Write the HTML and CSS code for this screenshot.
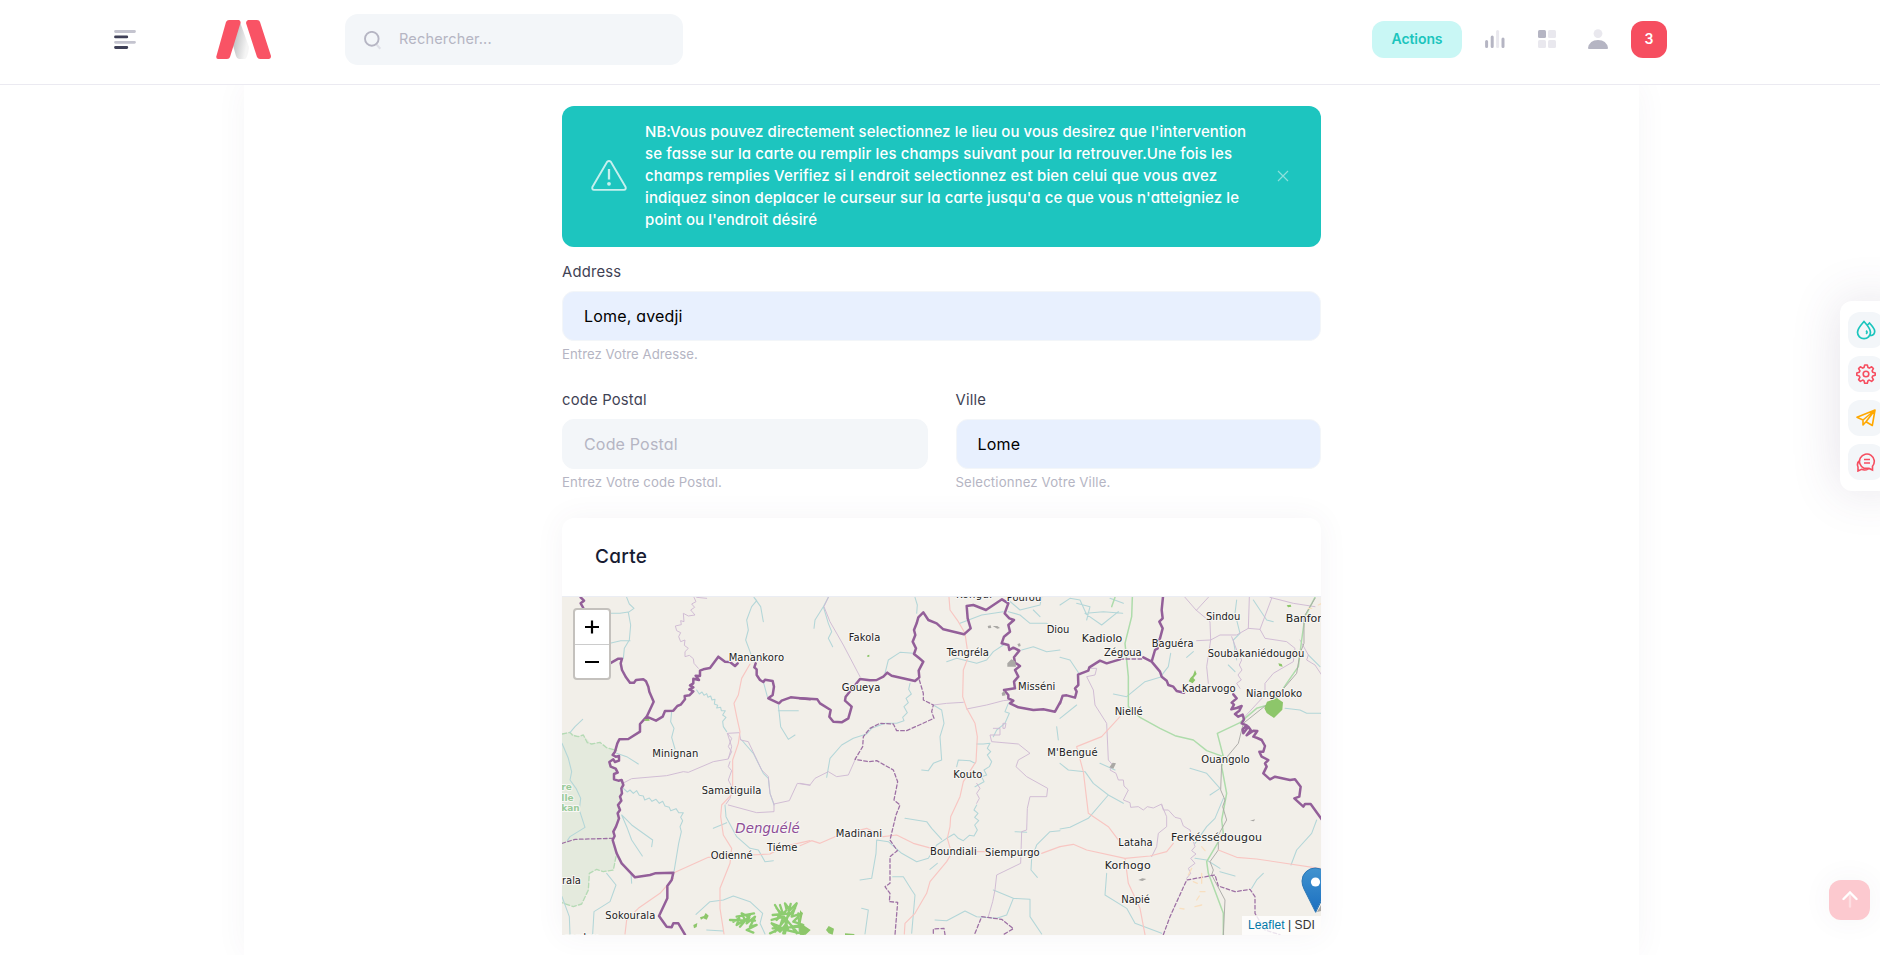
FILE: index.html
```html
<!DOCTYPE html>
<html lang="fr">
<head>
<meta charset="utf-8">
<title>Adresse</title>
<link rel="stylesheet" href="styles.css">
</head>
<body>
<header class="header">
  <div class="header-left">
    <svg class="menu-icon" width="22" height="19" viewBox="0 0 22 19"><g stroke-width="2.8" stroke-linecap="round"><path stroke="#c4c4cf" d="M1.500 1.500h19M1.500 12.300h19"/><path stroke="#3f4057" d="M1.500 6.900h11.300M1.500 17.500h11.300"/></g></svg>
    <svg class="logo" width="55" height="39" viewBox="0 0 55 39"><defs><linearGradient id="lg" x1="0" y1="0.2" x2="1" y2="0.6"><stop offset="0.1" stop-color="#b9bbbd"/><stop offset="0.9" stop-color="#f5f5f5"/></linearGradient></defs><path fill="url(#lg)" d="M24 2L33 27Q32 37 29 39H23Q21 39 20 36L16 22Z"/><path fill="#f95365" d="M13 0H23Q25 1 24.500 3L14 37Q13.500 39 11 39H2Q0 39 .3 36.500L10 2Q11 0 13 0ZM32 0H41Q43.500 0 44 2L55 36Q55 39 52.500 39H44Q42 39 41 37L30 3Q30 1 32 0Z"/></svg>
    <div class="search">
      <svg class="search-icon" width="18" height="20" viewBox="0 0 18 20" fill="none"><path d="M12.500 13.500l3.800 4.200" stroke="#dfe0e8" stroke-width="2.200"/><ellipse cx="7.800" cy="7.800" rx="6.800" ry="6.900" stroke="#b5b5c3" stroke-width="1.900"/></svg>
      <span class="t-search">Rechercher...</span>
    </div>
  </div>
  <div class="header-right">
    <div class="actions">Actions</div>
    <svg class="i-bars" width="20" height="18" viewBox="0 0 20 18" stroke-linecap="round" stroke-width="3"><path stroke="#b5b5c3" d="M1.600 11.500v5M7.200 7v9.500M18 9v7.500"/><path stroke="#e9e8ee" d="M12.600 1.600v15"/></svg>
    <svg class="i-grid" width="18" height="18" viewBox="0 0 18 18"><rect width="8" height="8" rx="1.500" fill="#b5b5c3"/><g fill="#e9e8ee"><rect x="10" width="8" height="8" rx="1.500"/><rect y="10" width="8" height="8" rx="1.500"/><rect x="10" y="10" width="8" height="8" rx="1.500"/></g></svg>
    <svg class="i-user" width="20" height="20" viewBox="0 0 20 20"><circle cx="10" cy="4.600" r="4.400" fill="#e9e8ee"/><path fill="#b5b5c3" d="M0 19Q1.500 11 10 11T20 19Q20 20 19 20H1Q0 20 0 19Z"/></svg>
    <div class="count">3</div>
  </div>
</header>

<main class="content">
  <div class="form">
    <div class="alert">
      <svg class="warning" width="36" height="31" viewBox="0 0 36 31" fill="none" stroke="#c6f0ee" stroke-width="1.900"><path d="M16.200 1.800Q18 .2 19.800 1.800L34.600 27Q35.300 29.700 33 29.900H3Q.7 29.700 1.400 27Z" stroke-linejoin="round"/><path d="M18 9v10.500" stroke-width="2.300"/><circle cx="18" cy="23.800" r="1.900" fill="#c6f0ee" stroke="none"/></svg>
      <p class="alert-text"><span class="l1">NB:Vous pouvez directement selectionnez le lieu ou vous desirez que l'intervention</span><br><span class="l2">se fasse sur la carte ou remplir les champs suivant pour la retrouver.Une fois les</span><br><span class="l3">champs remplies Verifiez si l endroit selectionnez est bien celui que vous avez</span><br><span class="l4">indiquez sinon deplacer le curseur sur la carte jusqu'a ce que vous n'atteigniez le</span><br><span class="l5">point ou l'endroit désiré</span></p>
      <svg class="close" width="12" height="12" viewBox="0 0 12 12" stroke="#8ce0dc" stroke-width="1.200"><path d="M1 1l10 10M11 1L1 11"/></svg>
    </div>
    <div class="field">
      <label class="label">Address</label>
      <div class="input filled">Lome, avedji</div>
      <div class="help short">Entrez Votre Adresse.</div>
    </div>
    <div class="row">
      <div class="field">
        <label class="label">code Postal</label>
        <div class="input">Code Postal</div>
        <div class="help">Entrez Votre code Postal.</div>
      </div>
      <div class="field">
        <label class="label">Ville</label>
        <div class="input filled">Lome</div>
        <div class="help wide">Selectionnez Votre Ville.</div>
      </div>
    </div>
    <section class="card">
      <h3 class="card-title">Carte</h3>
      <div class="map">
        <svg class="tiles" width="759" height="338" viewBox="562 597 759 338">
          <defs>
            <linearGradient id="pin" x1="0" y1="0" x2="0" y2="1"><stop offset="0" stop-color="#4193cf"/><stop offset="1" stop-color="#1b6fc0"/></linearGradient>
          </defs>
          <!-- western part -->
          <g transform="translate(550 580) scale(.33333)">
            <path class="park" d="M36 462L60 457 85 470 100 465 125 492 150 487 170 503 200 510 180 550 200 570 190 595 220 605 208 700 190 780 198 830 190 870 160 875 140 868 118 880 115 930 95 972 70 980 36 968Z"/>
            <path class="parkline" d="M36 462L60 457 68 466 85 470 100 465 112 488 125 492 150 487 170 503 200 512M198 830L190 870 160 875 140 868 118 880 115 930 95 972 70 980 36 968"/>
            <path class="river" d="M230 52L238 72 252 85 235 97 242 135 238 180 223 205 220 235M180 100L210 100 235 96M180 190L212 182 240 182M612 52L620 62 605 80 590 120 595 150 587 180 600 215 610 245M612 52L632 80 640 125M365 395L362 425 372 445 365 472 375 507M60 458L75 440 98 418M36 490L55 535 65 575 60 600 78 625 92 655 88 690 105 742 60 770 52 782M440 330L448 342 456 336 462 346 470 341 474 352 482 348 486 360 495 358 493 372 503 376 500 384 512 382 514 392 526 392 518 405 528 412 518 424 520 440 530 455M200 520L230 530 265 552M220 625L232 636 240 630 250 640 260 632 268 646 280 648 284 660 298 654 306 664 318 658 328 670 338 664 345 678 358 682 362 692 378 686 386 698 400 698 392 712 398 722 390 740 394 755 386 790 372 875M215 705L232 745 245 780 277 828M215 705L245 735 308 780 305 800M685 375L692 440 715 478 735 465M685 392L745 392M640 305L652 350M525 675L528 710 560 770 600 805 625 810 645 845 670 842M490 745L530 728M170 880L198 915 180 965 132 995 128 1062M36 950L58 1010 60 1062M438 1003L480 965 520 960 550 948 600 965 638 1000 630 1030 645 1062M470 1050L520 1053M243 880L245 910M575 480L610 520 640 580 655 595 660 640 672 675"/>
            <path class="lilac" d="M432 52L438 65 425 72 434 82 422 90 435 105 415 108 400 100 402 125 392 122 394 134 376 138 380 152 392 158 386 170 392 185 405 180 403 196 415 205 405 215 405 230 418 226 430 236 432 250 445 265M222 608L245 596 350 587 400 575 415 577 490 545 535 537 545 500 532 460 568 458 572 480 595 485 635 570 655 590 660 640 672 672 672 695 620 698 535 675M672 672L718 662 742 610 780 616M540 545L535 560 545 572 535 600 548 625 540 655 528 672M440 52L470 55M532 460L545 475 535 500 545 515 535 535"/>
            <path class="road" d="M600 252L575 295 565 345 552 370 560 410 570 455 565 490 548 540 548 640 515 675 512 710 520 765 545 805 540 850 510 925 510 985 522 1062M372 878L475 832 540 828M545 820L600 825 660 822 700 800 780 782M370 895L330 940 265 985 230 1020 225 1062"/>
            <path class="adm" d="M36 790L75 778 190 775"/>
            <path class="nat" d="M92 52L102 62 92 70 100 84M76 118V150M180 250L205 236 216 236 212 250 216 270 228 292 240 308 252 308 258 300 280 298 288 304 295 320 298 335 311 365 290 410 270 432 270 455 235 477 208 478 202 490 195 515 188 525 197 530 207 528 207 542 195 546 190 538 178 546 182 560 197 566 203 578 192 582 192 598 205 602 215 600 220 615 214 625 216 640 210 650 214 662 204 675 210 690 203 700 207 715 198 740 190 755 194 768 188 780 200 820 215 850 255 892 300 885 315 880 370 878 365 900 352 918 352 955 327 1008 350 1040 365 1042 370 1030 385 1030 405 1064M290 410L318 422 338 410 345 393 370 392 382 378 392 374 405 358 404 348 418 346 430 334 418 328 430 322 420 316 430 310 430 296 447 300 437 287 450 288 450 272 460 268 480 264 505 230 525 245 540 246 555 258 563 250M617 250L613 262 620 268 620 285 630 300 640 306 645 299 668 303 672 320 668 345 655 355 687 370 695 362 722 352 780 358"/>
            <path class="wood" d="M282 418l15-2 2 6-13 1zM430 1035l12-6-2 12-8 4zM450 1012l12-4 5-9 9 8-6 12-10-4-7 4z"/>
            <path class="scrub" d="M550 1025L568 1015 560 1035 585 1020 575 1000 598 1012 590 1030 615 1010 600 1040 620 1035 590 1050 610 1058M540 1020L615 1022M560 1010L612 1000M570 1040L600 1005M675 975L690 1000 680 1020 710 990 705 970 720 990 740 970 725 1010 755 1000 730 1025 760 1035 725 1040 740 1060M665 1020L700 1010 690 1040 665 1030 690 1055 710 1030 705 1060M680 985L740 1055M735 985L675 1055M745 1000L750 1055M668 1005L720 1000M668 1045L750 1040M690 975L715 1050M722 972L700 1060M660 1060L690 1046 760 1062"/>
          </g>
          <!-- central part -->
          <g transform="translate(800 580) scale(.33333)">
            <path class="river" d="M85 52L70 80 45 120 42 145M70 80L85 130 95 155 85 175 98 200M345 52L352 75 350 100M255 280L265 240 300 217 340 220M330 310L326 328 334 342 318 355 325 368 312 380 322 398 308 412 312 422 290 430 255 430 215 445 200 462 160 475 125 495 90 535 80 592M400 375L425 390 432 430 420 470 425 540 400 550 385 572 365 570M440 245L470 235 530 250 560 240 580 215 610 195M470 560L475 540 510 542 525 550M530 492L550 492 570 490 562 505 572 515 562 525 575 545 568 560 552 570 560 585 545 590 552 605 525 620M625 370L615 395 628 400 615 430 590 450 580 470M530 675L522 690 534 700 524 712 536 722 524 735 532 750 522 768 508 766 490 782 475 775 462 762 440 775M315 715L380 725 395 745 425 778M440 775L410 795 385 835 350 845 305 820 265 785 230 780 228 820 215 895 180 900M278 890L310 890 335 930 345 945 335 1060M185 985L205 990 195 1062M405 1020L440 1022 495 993 530 1010 590 1015 620 1005 640 955 580 930M640 955L690 958 690 1010 725 1062M390 868L412 850M645 755L680 757M780 752L750 755 710 795 695 835 693 870 712 892M625 95L660 105 690 130 740 130 780 155M665 210L700 200 740 215 780 210M480 130L545 105 610 95M625 60L660 90 720 75 725 52M700 90L720 110M770 440L775 480"/>
            <path class="lilac" d="M85 52L72 80 90 125 130 195 180 290M0 610L30 615 45 595 85 575 110 590 145 585 165 540M400 375L440 370 490 367M500 387L560 375 610 362 630 360M580 445L600 445 600 465 570 465 575 485 655 492 690 520 655 540 648 560 680 590 743 625 740 650 690 650 682 685 680 750 665 755 662 850 590 885 585 930 578 965 565 1010M610 430L618 430 615 445 610 445ZM530 610L540 625 530 640 538 655 530 670"/>
            <path class="road" d="M447 52L450 90 475 125 495 160 505 230 490 270 488 350 500 385 525 430 532 470 528 545 490 605 480 650 452 710 450 740 442 775 455 820 440 845 390 905 380 940 345 1000 315 1030 313 1062M0 797L35 782 60 790 105 770 200 745 250 770 290 765 340 790 395 805M530 815L560 815M725 820L780 800"/>
            <path class="adm" d="M358 300L370 340 370 360 400 375 395 395 402 415 320 452 290 452 280 432 240 430 210 445 190 470 188 500 165 538 205 545 230 542 280 570 293 605 282 660 300 675 288 705 270 780 292 812 270 830 270 910 255 920 270 940 268 965 293 967 285 1064M400 1060V1047L432 1045 435 1064M525 1060L545 1010 605 1018 640 1046 610 1064"/>
            <path class="nat" d="M0 355L52 358 60 370 92 390 88 410 100 425 125 427 145 415 155 380 135 362 137 350 180 297 210 301 230 300 250 290 262 278 275 287 345 303 358 292 356 272 370 245 358 235 342 222 348 205 338 185 346 165 342 150 350 130 355 112 370 97 385 120 410 130 430 148 492 163 512 145 503 115 500 78 520 75 558 90 606 58 625 70 614 100 628 115 642 120 625 135 630 155 612 170 605 190 625 195 628 210 640 203 658 212 642 232 645 248 660 258 645 270 655 290 642 305 645 325 612 330 625 345 625 355 640 362 630 370 655 382 700 390 730 388 765 395 780 368"/>
            <path class="town" d="M622 250l12-12 12 6 2 16H622zM605 340l8-8 4 14-10 2zM652 192l8-2 2 8-6 2zM563 138l9-2 2 8-9 1zM578 138h14l8 6-8 2z"/>
            <path class="wood" d="M0 990l8 10-6 30 30 20-15 14H0zM78 1050l8-12 16 8-4 18-12-4zM135 1060l28 2v3h-28zM202 226l6-2 0 6-6 1z"/>
          </g>
          <!-- eastern part -->
          <g transform="translate(1060 580) scale(.33333)">
            <path class="river" d="M0 75L30 55 60 60 78 100 130 95 188 100M50 70L90 80 80 120M75 100L125 135 175 95M150 55L190 70M0 232L30 240 60 285M0 415L50 375M160 342L200 350 255 305 300 292 325 260 332 220M0 550L25 570 75 575 100 610 145 645 190 670M145 645L85 715 30 742 0 747M390 565L440 580 480 625 450 645M140 880L135 945 200 985 225 1030 305 1060M770 720L755 760 710 810 693 855M490 655L465 715 440 740 405 790M480 865L440 840 405 835M480 875L525 888M575 925L590 900 610 880M675 385L720 390 740 400 785 400M530 60L525 100 540 160 520 180 530 240M580 60L620 120 640 125M780 260L745 225M380 232L400 215M120 550L165 570M505 255L525 275"/>
            <path class="lilac" d="M375 52L408 90 450 125 452 180 410 182M452 180L440 260 445 310M452 180L480 165 530 165 565 145 568 52M565 145L600 148 615 175 680 185 705 205 700 245 640 280 615 310 615 345 550 415M600 148L635 55M410 90L445 52M630 52L700 70 765 80M85 265L110 265 105 285 80 290 100 330 105 375 140 430 145 540 158 555 150 570 168 580 175 600 190 600 192 618 205 630 190 660 210 668 212 682 235 680 250 690 262 680 280 684 305 672 310 690 325 690 345 712 362 716 370 738 390 750M305 675L320 710 320 740 295 760 290 800 275 830M515 170L530 210 545 240 538 255 546 270 534 285 544 300 530 310 540 325M720 180L745 225 740 240 765 255 785 285M390 750L405 800 395 812 408 822 392 835 405 850 385 865 392 880 380 895"/>
            <path class="green" d="M155 80L165 52M217 52L215 110 195 190 205 290 205 380 240 412 300 445 345 467 400 480 440 512 490 530 485 560 500 640 485 720 490 760 440 845 445 880 490 1000 490 1064M490 530L472 460 540 428 590 385 640 370 680 310 715 260 725 180 735 110 765 52"/>
            <path class="rail" d="M490 1064L495 960 455 885 460 870 450 845 475 810 475 765 500 720 488 680 495 660 482 630 485 550 535 490 550 430 600 390 650 350 710 280 720 220 732 190 732 110 765 55"/>
            <path class="road" d="M0 800L40 793 80 810 195 835 270 828 320 815 340 790M195 835L205 910 240 985 255 1064M50 500L70 575 85 700 145 740 190 800M50 500L125 470 180 410M475 810L530 832 590 837 785 866"/>
            <path class="adm" d="M180 237H250M310 1064L330 1010 380 900 465 885 475 918 525 935 570 928 585 950 585 1000 615 1050 660 1064"/>
            <path class="nat" d="M0 370L8 347 20 346 45 353 50 335 45 325 55 315 54 284 85 272 88 262 120 242 140 250 180 238M250 232L275 245 300 275 305 290 320 302 325 315 340 320 350 333 372 338M275 245L285 210 293 205 290 190 300 175 308 145 298 125 308 115 305 90 309 50M520 343L530 355 515 368 522 374 514 388 530 384 545 378 538 392 525 402 535 410 548 404 552 418 545 430 560 436 548 448 550 460 565 440 572 450 560 466 580 452 592 453 580 470 592 474 605 480 615 498 610 515 598 515 605 530 625 540 615 550 620 560 610 580 630 598 645 590 690 600 705 598 722 620 718 650 703 655 730 680 735 672 752 672 785 718"/>
            <path class="wood" d="M405 270l5 12-10 12 6 6-8 10-12-6 5-10 8-8zM613 385l8-20 30-10 18 12-2 22-25 25-22-15zM655 250l10 2 3 8-10-2zM680 76l12-2 2 6-10 2z"/>
            <path class="sand" d="M385 885l10-20M425 800l10 12M400 905l12 5M420 935l15 0M360 985l12 2M405 980l20-5M745 85h10M425 880v30M410 960l8-12M775 75l10-5"/>
            <path class="town" d="M148 562l10-14 10 2-8 16zM235 900l12-5 12 2-12 6zM570 722l15-4-3 6z"/>
          </g>
          <g class="names">
            <g transform="translate(550 580) scale(.33333)"><text x="536" y="244" textLength="166">Manankoro</text><text x="307" y="531" textLength="138">Minignan</text><text x="455" y="642" textLength="179">Samatiguila</text><text x="482" y="838" textLength="126">Odienné</text><text x="651" y="813" textLength="91">Tiéme</text><text x="166" y="1017" textLength="150">Sokourala</text><text x="36" y="912" textLength="57">rala</text><text x="42" y="1082" textLength="104">sordou</text><text class="region" x="556" y="760" textLength="193">Denguélé</text><g class="parkname"><text x="34" y="631">re</text><text x="34" y="662">lle</text><text x="34" y="693">kan</text></g></g>
            <g transform="translate(800 580) scale(.33333)"><text x="146" y="184" textLength="95">Fakola</text><text x="440" y="228" textLength="127">Tengréla</text><text x="125" y="332" textLength="116">Goueya</text><text x="654" y="329" textLength="112">Misséni</text><text x="460" y="594" textLength="87">Kouto</text><text x="107" y="772" textLength="139">Madinani</text><text x="390" y="826" textLength="140">Boundiali</text><text x="555" y="827" textLength="164">Siempurgo</text><text x="740" y="160" textLength="68">Diou</text><text x="742" y="529" textLength="151">M'Bengué</text><text x="620" y="62" textLength="104">Pourou</text><text x="468" y="54" textLength="108">Kongui</text></g>
            <g transform="translate(1060 580) scale(.33333)"><text x="65" y="185" textLength="122" class="big">Kadiolo</text><text x="132" y="227" textLength="113">Zégoua</text><text x="275" y="201" textLength="126">Baguéra</text><text x="438" y="120" textLength="103">Sindou</text><text x="677" y="127" textLength="128" class="big">Banfora</text><text x="443" y="232" textLength="290">Soubakaniédougou</text><text x="366" y="335" textLength="161">Kadarvogo</text><text x="558" y="352" textLength="168">Niangoloko</text><text x="164" y="406" textLength="84">Niellé</text><text x="424" y="548" textLength="145">Ouangolo</text><text x="175" y="797" textLength="103">Lataha</text><text x="333" y="783" textLength="273" class="big">Ferkéssédougou</text><text x="134" y="867" textLength="138" class="big">Korhogo</text><text x="184" y="970" textLength="86">Napié</text></g>
          </g>
          <path class="pin-shadow" d="M1317 912L1321 905V911Z"/>
          <path class="pin" d="M1315.500 912L1304 889Q1302 885 1302 881A13.300 13 0 0 1 1328.600 881Q1328.600 885 1327 889Z"/>
          <circle cx="1315.500" cy="882" r="4.600" fill="#fff"/>
        </svg>
        <div class="zoom">
          <div class="zoom-btn"><svg width="14" height="14" viewBox="0 0 14 14"><path d="M7 .5v13M0 7h14"/></svg></div>
          <div class="zoom-btn"><svg width="14" height="14" viewBox="0 0 14 14"><path d="M0 7h14"/></svg></div>
        </div>
        <div class="attribution"><span class="link">Leaflet</span> | SDI</div>
      </div>
    </section>
  </div>
</main>

<aside class="toolbar">
  <div class="tool"><svg width="20" height="20" viewBox="0 0 20 20" fill="none" stroke="#1bc5bd" stroke-width="1.700"><path d="M8 1.500C5 5 1.500 8.500 1.500 12.200a6.500 6.500 0 0 0 13 0C14.500 8.500 11 5 8 1.500ZM11.500 5L13.500 3C16 6 18.700 8.500 18.700 11.300 18.700 14 17 15.500 14.300 15.600M10 10.800q2.200 1.500 0 3"/></svg></div>
  <div class="tool"><svg width="20" height="20" viewBox="0 0 20 20" fill="none" stroke="#f64e60" stroke-width="1.600"><path stroke-linejoin="round" d="M8.700 1h2.600l.7 2.500 1.300.6 2.300-1.300 1.800 1.800-1.300 2.300.6 1.300 2.500.7v2.400l-2.500.7-.6 1.300 1.300 2.300-1.800 1.800-2.300-1.300-1.300.6-.7 2.500H8.700L8 16.700l-1.300-.6-2.300 1.300-1.800-1.800 1.300-2.300-.6-1.300-2.500-.7V8.900l2.500-.7.6-1.300-1.300-2.300 1.800-1.800 2.300 1.300L8 3.500Z"/><circle cx="10" cy="10" r="2.800"/></svg></div>
  <div class="tool"><svg width="20" height="18" viewBox="0 0 20 18" fill="none" stroke="#ffa800" stroke-width="1.600" stroke-linejoin="round"><path d="M1 8.200L19 1 16.300 16.500 10 12.800 7 16V11ZM7 11L19 1 10 12.800"/></svg></div>
  <div class="tool"><svg width="20" height="20" viewBox="0 0 20 20" fill="none" stroke="#f64e60" stroke-width="1.600"><path d="M8 16.200A7.400 7.400 0 1 1 16.500 14.200V18L13 16.400ZM4.200 8Q.2 11 2 15V19L5.500 17.300Q9 19 12.500 16.800M8 7.500h6M8 11h6"/></svg></div>
</aside>
<div class="scrolltop"><svg width="16" height="17" viewBox="0 0 16 17" fill="none" stroke="#fff" stroke-width="2.400" stroke-linecap="round"><path stroke="#fddde1" d="M8 5v10.500"/><path d="M1.500 8L8 1.500 14.500 8"/></svg></div>
</body>
</html>
```
FILE: styles.css
```css
* { box-sizing: border-box; }
body { margin: 0; height: 955px; overflow: hidden; background: #fff; color: #3f4254; font-family: Inter, "Open Sans", sans-serif; font-feature-settings: "cv11"; font-size: 14px; }
svg { display: block; flex: none; }
span { white-space: nowrap; }

.header { height: 85px; padding: 0 213px 6px 114px; display: flex; justify-content: space-between; align-items: center; background: #fff; border-bottom: 1px solid #ebeaf1; position: relative; z-index: 2; }
.header-left, .header-right { display: flex; align-items: center; }
.menu-icon { margin-right: 80px; }
.logo { margin-right: 74px; }
.search { width: 338px; height: 51px; padding-left: 19px; display: flex; align-items: center; gap: 17px; background: #f3f6f9; border-radius: 13px; color: #b5b5c3; }
.search-icon { margin-top: 3px; }
.t-search { margin-top: -1px; font-size: 14.500px; letter-spacing: .18px; }
.actions { width: 90px; height: 37px; padding-bottom: 2px; display: grid; place-items: center; border-radius: 12px; background: #c9f7f5; color: #1bc5bd; font-weight: 600; letter-spacing: -.08px; }
.i-bars { margin-left: 23px; }
.i-grid { margin-left: 33px; }
.i-user { margin-left: 32px; }
.count { width: 36px; height: 37px; margin-left: 23px; padding-bottom: 2px; display: grid; place-items: center; border-radius: 12px; background: #f64e60; color: #fff; font-weight: 600; }

.content { width: 1395px; height: 870px; margin-left: 244px; padding: 21px 318px 0; box-shadow: 0 0 30px rgba(82, 63, 105, .05); }
.alert { height: 141px; padding: 0 32px 2px 29px; display: flex; align-items: center; background: #1dc5bf; border-radius: 12px; color: #fff; }
.alert-text { flex: 1; margin: 0 0 0 18px; font-size: 15px; font-weight: 500; line-height: 22px; }
.close { margin-right: 0; }
.l1 { letter-spacing: .077px; }
.l2 { letter-spacing: .123px; }
.l3 { letter-spacing: .126px; }
.l4 { letter-spacing: .101px; }
.l5 { letter-spacing: .11px; }
.field { flex: 1; padding-top: 14px; }
.label { display: block; height: 22px; font-size: 14.800px; line-height: 22px; letter-spacing: .2px; }
.input { height: 50px; margin: 8px 0 3px; padding: 0 0 1px 21px; display: flex; align-items: center; background: #f3f6f9; border: 1px solid #f3f6f9; border-radius: 12px; color: #b5b5c3; font-size: 16px; letter-spacing: .18px; }
.filled { background: #e8f0fe; color: #000; }
.help { height: 21px; line-height: 20px; font-size: 13.200px; letter-spacing: .1px; color: #b5b5c3; }
.short { letter-spacing: .04px; }
.wide { letter-spacing: .158px; }
.row { display: flex; gap: 28px; padding-top: 10px; }

.card { height: 417px; margin-top: 25px; border-radius: 12px 12px 0 0; box-shadow: 0 0 30px rgba(82, 63, 105, .06); }
.card-title { height: 79px; margin: 0; padding: 0 0 2px 33px; display: flex; align-items: center; border-bottom: 1px solid #ebedf3; color: #181c32; font-size: 19px; font-weight: 500; letter-spacing: .3px; }
.map { position: relative; height: 338px; background: #f2efe9; overflow: hidden; }
.tiles path { fill: none; stroke-linejoin: round; stroke-linecap: round; }
.tiles .pin { fill: url(#pin); stroke: #2c77b5; }
.tiles .pin-shadow { fill: #a5a4a1; }
.tiles .park { fill: #e4eadd; }
.tiles .parkline { stroke: #b5dab5; stroke-width: 4; stroke-dasharray: 14 7; }
.tiles .river { stroke: #b3d6d8; stroke-width: 3.200; }
.tiles .lilac { stroke: #cfb9d3; stroke-width: 2.800; }
.tiles .road { stroke: #f8c6c2; stroke-width: 3.500; }
.tiles .green { stroke: #aedcab; stroke-width: 4.500; }
.tiles .rail { stroke: #aaa9a6; stroke-width: 2.800; }
.tiles .adm { stroke: #9d70a4; stroke-width: 3.800; stroke-dasharray: 11 7; }
.tiles .nat { stroke: #935f99; stroke-width: 7.500; }
.tiles .wood { fill: #8dc66a; }
.tiles .scrub { stroke: #8dcc70; stroke-width: 7; }
.tiles .sand { stroke: #f8dfc0; stroke-width: 4; }
.tiles .town { fill: #aaa8a5; }
.names { font: 30px "DejaVu Sans", sans-serif; fill: #222; stroke: #f8f7f4; stroke-width: 6px; stroke-linejoin: round; paint-order: stroke; }
.names .big { font-size: 33px; }
.names .region { font-size: 40px; font-style: oblique; fill: #8d4c97; }
.names .parkname { font-size: 27px; font-weight: bold; fill: #9acb9a; }
.zoom { position: absolute; left: 11px; top: 11px; width: 38px; border: 2px solid #c4c1bd; border-radius: 4px; overflow: hidden; background: #fff; }
.zoom-btn { height: 34px; display: grid; place-items: center; }
.zoom-btn path { stroke: #000; stroke-width: 2.200; }
.zoom-btn + .zoom-btn { border-top: 1px solid #ccc; }
.attribution { position: absolute; right: 0; bottom: 0; width: 79px; height: 19px; padding-left: 6px; background: rgba(255, 255, 255, .8); color: #333; font: 12px/18px "Liberation Sans", sans-serif; letter-spacing: .08px; white-space: nowrap; }
.link { color: #0078a8; }

.toolbar { position: fixed; left: 1840px; top: 301px; width: 60px; height: 190px; padding: 11px 8px; display: flex; flex-direction: column; justify-content: space-between; background: #fff; border-radius: 12px; box-shadow: 0 0 50px rgba(82, 63, 105, .15); }
.tool { width: 36px; height: 36px; display: grid; place-items: center; background: #f3f6f9; border-radius: 12px; }
.scrolltop { position: fixed; left: 1829px; top: 880px; width: 41px; height: 40px; padding-bottom: 1px; display: grid; place-items: center; border-radius: 12px; background: #fcc9cf; box-shadow: 0 0 30px rgba(82, 63, 105, .06); }
```
